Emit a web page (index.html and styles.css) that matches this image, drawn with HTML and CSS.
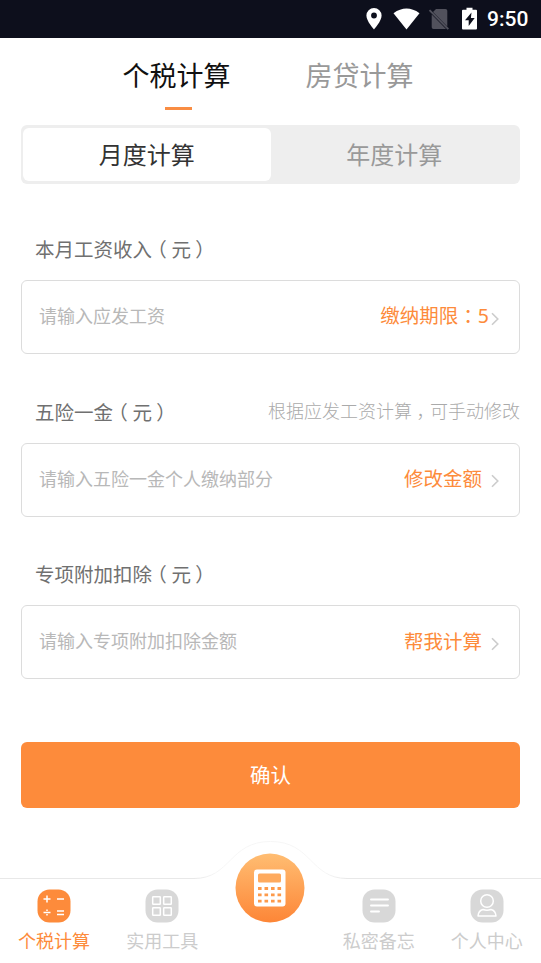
FILE: index.html
```html
<!DOCTYPE html>
<html lang="zh-CN">
<head>
<meta charset="utf-8">
<title>个税计算</title>
<link rel="stylesheet" href="styles.css">
</head>
<body>
<div class="app">
  <header class="status">
    <svg width="166" height="38" viewBox="0 0 166 38">
      <path fill="#fff" fill-rule="evenodd" d="M14 8a7.6 7.6 0 0 0-7.6 7.6C6.400 21.300 14 29.500 14 29.500s7.600-8.200 7.600-13.900A7.600 7.600 0 0 0 14 8Zm0 4.600a2.900 2.900 0 1 1 0 5.800 2.900 2.900 0 0 1 0-5.800Z"/>
      <path fill="#fff" d="M33.500 13.200Q46.500 4 59.500 13.200L46.500 29.500Z"/>
      <path fill="#51515c" d="M76 9h9.500a1.800 1.800 0 0 1 1.800 1.800V26.500L73 12ZM71.700 14.500 86 29H73.500a1.800 1.800 0 0 1-1.800-1.800Z"/>
      <path stroke="#51515c" stroke-width="1.900" d="m69.500 10.200 18.800 19"/>
      <path fill="#fff" d="M106.500 7.700h6v2h3.500a1 1 0 0 1 1 1V28.500a1 1 0 0 1-1 1h-13a1 1 0 0 1-1-1V10.700a1 1 0 0 1 1-1h3.500Z"/>
      <path fill="#0d0f1c" d="M111.500 12.500 105 20.300h3.700v5.700l6-8h-3.800Z"/>
    </svg>
    <span class="time">9:50</span>
  </header>

  <nav class="tabs">
    <span class="tab tab-active">个税计算</span>
    <span class="tab">房贷计算</span>
  </nav>

  <main class="content">
    <div class="segment">
      <span class="seg seg-active">月度计算</span>
      <span class="seg">年度计算</span>
    </div>

    <section class="field">
      <div class="field-head"><span class="label">本月工资收入<span class="mid">（</span>元<span class="mid close">）</span></span></div>
      <div class="box box-tight">
        <span class="placeholder">请输入应发工资</span>
        <span class="action">缴纳期限<span class="mid">：</span>5</span>
        <svg class="chevron" width="8" height="14" viewBox="0 0 8 14"><path d="m1 1.200 5.800 5.800L1 12.800"/></svg>
      </div>
    </section>

    <section class="field">
      <div class="field-head"><span class="label">五险一金<span class="mid">（</span>元<span class="mid close">）</span></span><span class="hint">根据应发工资计算<span class="mid">，</span>可手动修改</span></div>
      <div class="box">
        <span class="placeholder">请输入五险一金个人缴纳部分</span>
        <span class="action">修改金额</span>
        <svg class="chevron" width="8" height="14" viewBox="0 0 8 14"><path d="m1 1.200 5.800 5.800L1 12.800"/></svg>
      </div>
    </section>

    <section class="field">
      <div class="field-head"><span class="label">专项附加扣除<span class="mid">（</span>元<span class="mid close">）</span></span></div>
      <div class="box">
        <span class="placeholder">请输入专项附加扣除金额</span>
        <span class="action">帮我计算</span>
        <svg class="chevron" width="8" height="14" viewBox="0 0 8 14"><path d="m1 1.200 5.800 5.800L1 12.800"/></svg>
      </div>
    </section>

    <button class="confirm">确认</button>
  </main>

  <footer class="bottom">
    <svg class="edge" width="541" height="40" viewBox="0 0 541 40"><defs><linearGradient id="e" gradientUnits="userSpaceOnUse" x1="0" y1="0" x2="541" y2="0"><stop offset=".36" stop-color="#e8e8e8"/><stop offset=".4" stop-color="#f6f6f6"/><stop offset=".6" stop-color="#f6f6f6"/><stop offset=".64" stop-color="#e8e8e8"/></linearGradient></defs><path stroke="url(#e)" d="M0 38.500H194C231 38.500 229 1.500 270.500 1.500S310 38.500 347 38.500H541"/></svg>
    <div class="item item-active">
      <svg width="34" height="34" viewBox="0 0 34 34"><rect x=".5" y=".5" width="33" height="33" rx="12" fill="#fd8b3b"/><path stroke="#fff" stroke-width="1.500" fill="none" d="M6.500 10h7M10 6.500v7M20 10h7M6.500 23.500h7M10 20.500v1.600M10 24.900v1.600M20 22h7M20 25.500h7"/></svg>
      <span>个税计算</span>
    </div>
    <div class="item">
      <svg width="34" height="34" viewBox="0 0 34 34"><rect x=".5" y=".5" width="33" height="33" rx="12" fill="#d8d8d8"/><g fill="none" stroke="#fff" stroke-width="1.500"><rect x="7.700" y="7.700" width="7.600" height="7.600" rx=".5"/><rect x="18.700" y="7.700" width="7.600" height="7.600" rx=".5"/><rect x="7.700" y="18.700" width="7.600" height="7.600" rx=".5"/><rect x="18.700" y="18.700" width="7.600" height="7.600" rx=".5"/></g></svg>
      <span>实用工具</span>
    </div>
    <div class="item-center">
      <svg width="70" height="70" viewBox="0 0 70 70">
        <defs><linearGradient id="g" x1="0" y1="0" x2="0" y2="1"><stop offset="0" stop-color="#ffbd72"/><stop offset="1" stop-color="#fd8637"/></linearGradient></defs>
        <circle cx="35" cy="35" r="34.500" fill="url(#g)"/>
        <rect x="19" y="16.500" width="31.500" height="37" rx="3" fill="#fff"/>
        <rect x="23" y="20.500" width="23" height="9" rx="1.500" fill="#feaa5e"/>
        <path stroke="#fd9a4b" stroke-width="2.800" stroke-dasharray="3.600 2.900" d="M23 35.500h23.200M23 41.800h23.200M23 48.100h23.200"/>
      </svg>
    </div>
    <div class="item">
      <svg width="34" height="34" viewBox="0 0 34 34"><rect x=".5" y=".5" width="33" height="33" rx="12" fill="#d8d8d8"/><path stroke="#fff" stroke-width="1.900" stroke-linecap="round" d="M9 10.500h17M9 16.500h17M9 22.500h8"/></svg>
      <span>私密备忘</span>
    </div>
    <div class="item">
      <svg width="34" height="34" viewBox="0 0 34 34"><rect x=".5" y=".5" width="33" height="33" rx="12" fill="#d8d8d8"/><g fill="none" stroke="#fff" stroke-width="1.500"><circle cx="17" cy="12" r="6.300"/><path stroke-linejoin="round" d="M8 27Q8.500 21.500 13 20.500Q17 22 21 20.500Q25.500 21.500 26 27Z"/></g></svg>
      <span>个人中心</span>
    </div>
  </footer>
</div>
</body>
</html>
```
FILE: styles.css
```css
* { box-sizing: border-box; }

body {
  margin: 0;
  background: #fff;
  font-family: "Noto Sans", "Noto Sans CJK SC", sans-serif;
  font-weight: 400;
  white-space: nowrap;
}

.app {
  display: flex;
  flex-direction: column;
  width: 541px;
  height: 963px;
  overflow: hidden;
}

.status {
  display: flex;
  justify-content: flex-end;
  height: 38px;
  padding-right: 12px;
  background: #0d0f1c;
  color: #fff;
}

.status svg { flex: none; margin-right: -39px; }

.time {
  width: 42px;
  font: 500 21px/39px Roboto, sans-serif;
}

.tabs {
  display: flex;
  gap: 75px;
  height: 87px;
  padding: 18px 0 0 122.500px;
}

.tab {
  display: flex;
  flex-direction: column;
  align-items: center;
  font-size: 27px;
  line-height: 40px;
  color: #999;
}

.tab-active { color: #111; }

.tab-active::after {
  content: "";
  width: 27px;
  height: 3px;
  margin: 11px 0 0 4px;
  background: #f98d43;
}

.content { padding: 0 21px; }

.segment {
  display: flex;
  height: 59px;
  padding: 3px 2px;
  border-radius: 6px;
  background: #eee;
}

.seg {
  flex: 1;
  border-radius: 6px;
  font-size: 24px;
  line-height: 53px;
  text-align: center;
  color: #999;
}

.seg-active { background: #fff; color: #333; }

.field { height: 162.500px; }

.field-head {
  display: flex;
  justify-content: space-between;
  height: 96px;
  padding: 49px 0 0 14px;
  line-height: 31px;
}

.label { font-size: 19.500px; color: #707070; }
.hint { font-size: 18px; font-weight: 300; line-height: 29px; color: #aaa; }

/* Full-width punctuation centred in its em square */
.mid {
  margin: 0 .25em;
  font-family: "Noto Sans CJK SC", sans-serif;
  font-feature-settings: "halt";
}

.label .close { margin: 0 .28em 0 .22em; }

.box {
  display: flex;
  align-items: center;
  height: 74px;
  padding: 0 20px 0 17px;
  border: 1.500px solid #dcdcdc;
  border-radius: 6px;
}

.placeholder { flex: 1; padding-bottom: 4px; font-size: 18px; color: #b8b8b8; }
.action { margin-right: 9px; padding-bottom: 1px; font-size: 19.500px; line-height: 28px; color: #fd8b3b; }
.box-tight .action { margin-right: 2px; padding-bottom: 4px; }

.chevron { flex: none; margin-top: 3px; fill: none; stroke: #ccc; stroke-width: 1.600; }

.confirm {
  display: block;
  width: 100%;
  height: 66px;
  margin-top: 70px;
  padding: 0 0 2px;
  border: 0;
  border-radius: 6px;
  background: #fd8b3b;
  color: #fff;
  font: inherit;
  font-size: 20.500px;
}

.bottom {
  position: relative;
  display: grid;
  grid-template-columns: repeat(5, 108.200px);
  height: 123px;
  margin-top: auto;
}

.edge {
  position: absolute;
  top: 0;
  left: 0;
  fill: none;
}

.item {
  display: flex;
  flex-direction: column;
  align-items: center;
  padding-top: 49px;
  font-size: 18px;
  line-height: 36px;
  color: #ccc;
}

.item-active { color: #fd8b3b; }

.item-center { padding: 13px 0 0 19px; }
```
